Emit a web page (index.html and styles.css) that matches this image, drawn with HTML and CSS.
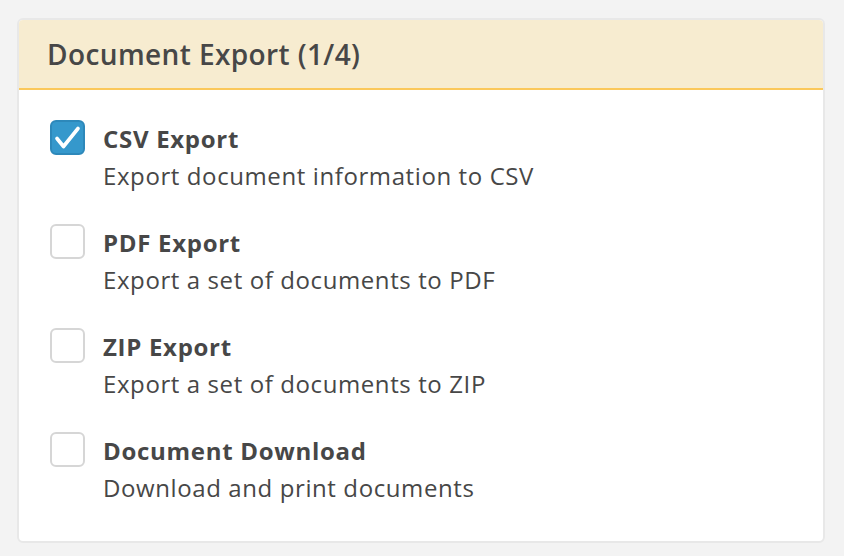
FILE: index.html
```html
<!DOCTYPE html>
<html lang="en">
<head>
    <meta charset="UTF-8">
    <meta name="viewport" content="width=device-width, initial-scale=1.0">
    <title>Document Export</title>
    <link rel="stylesheet" href="styles.css">
</head>
<body>

    <!-- Export options panel -->
    <div class="panel">
        <div class="panel-header">
            <h2>Document Export (1/4)</h2>
        </div>
        <div class="panel-body">
            <label class="option">
                <span class="check checked">
                    <svg viewBox="0 0 35 35" width="35" height="35">
                        <path d="M7 18.5 L13.5 26.5 L28 8.5" fill="none" stroke="#fff" stroke-width="3.6" stroke-linecap="round" stroke-linejoin="round"/>
                    </svg>
                </span>
                <span class="option-text">
                    <span class="option-title">CSV Export</span>
                    <span class="option-desc">Export document information to CSV</span>
                </span>
            </label>
            <label class="option">
                <span class="check"></span>
                <span class="option-text">
                    <span class="option-title">PDF Export</span>
                    <span class="option-desc">Export a set of documents to PDF</span>
                </span>
            </label>
            <label class="option">
                <span class="check"></span>
                <span class="option-text">
                    <span class="option-title">ZIP Export</span>
                    <span class="option-desc">Export a set of documents to ZIP</span>
                </span>
            </label>
            <label class="option">
                <span class="check"></span>
                <span class="option-text">
                    <span class="option-title">Document Download</span>
                    <span class="option-desc">Download and print documents</span>
                </span>
            </label>
        </div>
    </div>

</body>
</html>
```

FILE: styles.css
```css
body {
    margin: 0;
    padding: 18px 0 0 17px;
    background-color: #f3f3f3;
    font-family: "Open Sans", Arial, sans-serif;
    color: #474747;
}

.panel {
    width: 804px;
    background-color: white;
    border: 2px solid #e8e8e8;
    border-radius: 6px;
    overflow: hidden;
}

.panel-header {
    background-color: #f7ecd0;
    border-bottom: 2px solid #fbc85a;
    height: 68px;
    padding: 0 28px;
    display: flex;
    align-items: center;
}

.panel-header h2 {
    margin: 0;
    font-size: 28px;
    font-weight: 600;
    letter-spacing: 0.4px;
    color: #474747;
}

.panel-body {
    display: flex;
    flex-direction: column;
    gap: 30px;
    padding: 30px 31px 35px;
}

.option {
    display: flex;
    align-items: flex-start;
    gap: 18px;
    cursor: pointer;
}

.check {
    flex: none;
    width: 35px;
    height: 35px;
    box-sizing: border-box;
    border: 2px solid #d6d6d6;
    border-radius: 6px;
    background-color: white;
}

.check.checked {
    background-color: #3598cc;
    border-color: #2d88ba;
}

.check svg {
    display: block;
    margin: -2px;
}

.option-text {
    display: flex;
    flex-direction: column;
    font-size: 24px;
    line-height: 37px;
}

.option-title {
    font-weight: 700;
    letter-spacing: 0.7px;
}

.option-desc {
    letter-spacing: 0.6px;
}
```
